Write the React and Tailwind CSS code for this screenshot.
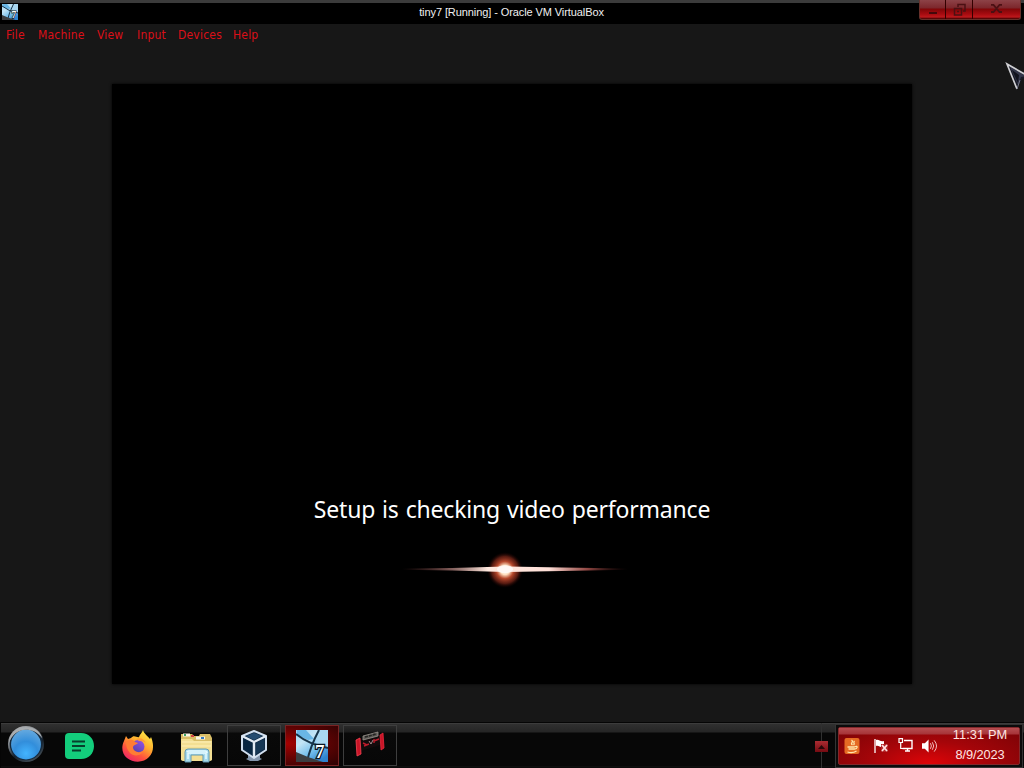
const menus = [
    { label: 'File', width: 'w-[20px]' },
    { label: 'Machine', width: 'w-[47px]' },
    { label: 'View', width: 'w-[28px]' },
    { label: 'Input', width: 'w-[29px]' },
    { label: 'Devices', width: 'w-[43px]' },
    { label: 'Help', width: 'w-[26px]' },
];

function TinyIcon({ className }) {
    return (
        <svg className={className} viewBox="0 0 32 32">
            <defs>
                <linearGradient id="sky" x1="0" y1="0" x2="0.7" y2="1">
                    <stop offset="0" stopColor="#9fd4f3" />
                    <stop offset="0.35" stopColor="#c3e4f5" />
                    <stop offset="0.7" stopColor="#71bdec" />
                    <stop offset="1" stopColor="#2f83cf" />
                </linearGradient>
            </defs>
            <rect width="32" height="32" fill="url(#sky)" />
            <path d="M23 0H32V17L20 13Z" fill="#a9d7f1" />
            <path d="M1 0H10L18 9L12 10L1 5Z" fill="#69b6e6" />
            <path d="M0 4Q12 14 32 18M23 0Q14 17 11 32" fill="none" stroke="#173449" strokeWidth="2" />
            <path d="M0 22L12 27L27 32H0Z" fill="#3c3e41" />
            <text
                x="19"
                y="28"
                fontSize="19"
                fontWeight="bold"
                fontFamily="Liberation Serif, serif"
                fill="#fff"
                stroke="#0b1520"
                strokeWidth="2.5"
                paintOrder="stroke"
            >
                7
            </text>
        </svg>
    );
}

function TitleBar() {
    return (
        <header className="flex h-6 border-t-[3px] border-[#3b3b3b] bg-black text-white">
            <div className="flex w-[104px] pl-[2px] pt-px">
                <TinyIcon className="h-4 w-4" />
            </div>
            <div className="flex-1 whitespace-nowrap pl-px text-center text-[11px] leading-[18px] tracking-[-0.09px] text-[#f0f0f0]">
                tiny7 [Running] - Oracle VM VirtualBox
            </div>
            <div className="-mt-[3px] flex h-5 w-[106px] pl-px">
                <div className="flex h-5 w-[102px] divide-x divide-[#300] rounded-b-[3px] border border-t-0 border-[#66302a] bg-[linear-gradient(#8d4247_0px,#7c262b_8px,#7f0608_9px,#a60b10_14px,#bd181c_17px,#3a0000_19px)]">
                    <div className="flex w-[26px] justify-center pt-[12px]">
                        <span className="h-[2px] w-2 bg-[#43090b]" />
                    </div>
                    <div className="flex w-[27px] justify-center pt-[3px]">
                        <svg
                            className="h-[13px] w-[13px]"
                            viewBox="0 0 13 13"
                            fill="none"
                            stroke="#4b1013"
                            strokeWidth="1.5"
                        >
                            <path d="M5 4V1.5H12V8H10M1.5 5.5H8.5V12H1.5ZM4 8.5H6" />
                        </svg>
                    </div>
                    <div className="flex flex-1 justify-center pt-[4px]">
                        <svg
                            className="h-[9px] w-[13px]"
                            viewBox="0 0 13 9"
                            fill="none"
                            stroke="#4b1013"
                            strokeWidth="1.8"
                        >
                            <path d="M1 .9H3.5L9.5 8H12M12 .9H9.5L3.5 8H1" />
                        </svg>
                    </div>
                </div>
            </div>
        </header>
    );
}

function MenuBar() {
    return (
        <nav className="flex h-[60px] gap-[12px] pl-[6px] pt-[3px] font-['DejaVu_Sans_Condensed','DejaVu_Sans',sans-serif] text-[12px] leading-4 tracking-[0.2px] text-[#dc0f18]">
            {menus.map((menu) => (
                <span
                    key={menu.label}
                    className={`whitespace-nowrap font-stretch-condensed ${menu.width}`}
                >
                    {menu.label}
                </span>
            ))}
        </nav>
    );
}

function Flare() {
    return (
        <svg className="mt-[14px] h-[60px] w-[260px]" viewBox="0 0 260 60">
            <defs>
                <radialGradient id="glow">
                    <stop offset="0" stopColor="#fff" />
                    <stop offset="0.26" stopColor="#ffdfc0" />
                    <stop offset="0.48" stopColor="#c94f30" stopOpacity="0.9" />
                    <stop offset="0.75" stopColor="#86291a" stopOpacity="0.65" />
                    <stop offset="1" stopColor="#200" stopOpacity="0" />
                </radialGradient>
                <linearGradient id="beam">
                    <stop offset="0" stopColor="#733" stopOpacity="0" />
                    <stop offset="0.2" stopColor="#a77470" stopOpacity="0.7" />
                    <stop offset="0.38" stopColor="#ffe9df" />
                    <stop offset="0.65" stopColor="#ffe0d8" />
                    <stop offset="0.82" stopColor="#b65a55" stopOpacity="0.8" />
                    <stop offset="1" stopColor="#411" stopOpacity="0" />
                </linearGradient>
            </defs>
            <circle cx="123" cy="30" r="18" fill="url(#glow)" />
            <path
                d="M20 28.5L70 28L123 26.5L180 27.5L246 28.5V29.7L180 31L123 32L70 30.5L20 29.7Z"
                fill="url(#beam)"
            />
            <ellipse cx="123" cy="29.2" rx="8" ry="4" fill="#fff" opacity="0.7" />
        </svg>
    );
}

function GuestScreen() {
    return (
        <main className="mx-auto flex h-[600px] w-[800px] flex-col items-center bg-black pt-[408px] shadow-[0_0_3px_#000]">
            <p className="whitespace-nowrap font-['Noto_Sans','Open_Sans',sans-serif] text-[23px] leading-[34px] tracking-[-0.19px] [word-spacing:1.2px] text-white">
                Setup is checking video performance
            </p>
            <Flare />
        </main>
    );
}

function StartOrb() {
    return (
        <svg className="h-[38px] w-[40px]" viewBox="0 0 40 40">
            <defs>
                <radialGradient id="orb" cx="0.5" cy="0.8" r="0.8">
                    <stop offset="0" stopColor="#43b4ff" />
                    <stop offset="0.5" stopColor="#328edb" />
                    <stop offset="1" stopColor="#65a9df" />
                </radialGradient>
                <linearGradient id="rim" x1="0" y1="0" x2="0.6" y2="1">
                    <stop offset="0" stopColor="#c8c8c8" />
                    <stop offset="0.45" stopColor="#72787e" />
                    <stop offset="0.7" stopColor="#15202b" />
                    <stop offset="1" stopColor="#3f4a53" />
                </linearGradient>
            </defs>
            <circle cx="20" cy="20" r="19" fill="url(#rim)" />
            <circle cx="20" cy="20" r="17.2" fill="#14293d" />
            <circle cx="20" cy="20.5" r="15.7" fill="url(#orb)" />
            <path d="M2 19C2 9 10 2 20 2C30 2 36 8 37 14C32 7 26 5 20 5C11 5 5 11 2 19Z" fill="#a8acaf" />
        </svg>
    );
}

function NotesIcon() {
    return (
        <svg className="h-[28px] w-[30px]" viewBox="0 0 30 28">
            <path d="M4 1H16C24 1 29 7 29 14S24 27 16 27H4Q0 27 0 23V5Q0 1 4 1Z" fill="#13cd7c" />
            <path d="M7 9.5H20M7 14H20M7 18.5H16" stroke="#073f2c" strokeWidth="1.8" />
        </svg>
    );
}

function FirefoxIcon() {
    return (
        <svg className="h-[32px] w-[32px]" viewBox="0 0 32 32">
            <defs>
                <linearGradient id="fox" x1="0.8" y1="0" x2="0.2" y2="1">
                    <stop offset="0" stopColor="#fff04a" />
                    <stop offset="0.4" stopColor="#ffad2d" />
                    <stop offset="0.7" stopColor="#ff533d" />
                    <stop offset="1" stopColor="#e9206c" />
                </linearGradient>
                <linearGradient id="globe" x1="1" y1="0" x2="0.3" y2="1">
                    <stop offset="0" stopColor="#9a55e9" />
                    <stop offset="1" stopColor="#5440ad" />
                </linearGradient>
            </defs>
            <path d="M21 0C22 4 26 6 28 9L29 7C32 14 32 22 27 27C22 33 11 33 5 28C0 24-1 17 2 11L4 6L6 9L9 8C12 4 15 8 17 7C18 4 20 3 21 0Z" fill="url(#fox)" />
            <circle cx="16" cy="16.5" r="6.5" fill="url(#globe)" />
            <path d="M4 12C7 9 11 9 13 12L16 13C15 15 12 14 11 17C11 22 18 24 22 20C20 26 12 27 8 23C5 20 4 16 4 12Z" fill="#ff7c34" />
            <path d="M14 9C18 7 22 9 24 13C21 11 19 11 17 11Z" fill="#ff9b35" />
        </svg>
    );
}

function FolderIcon() {
    return (
        <svg className="h-[31px] w-[33px]" viewBox="0 0 33 31">
            <path d="M1 5V2H12L14 4H19L20 2H30L32 6V28H1Z" fill="#d8bd67" />
            <path d="M3 3H10M16 6H25" stroke="#f7f5e4" strokeWidth="3" />
            <path d="M4 3H6" stroke="#3b9f61" strokeWidth="2" />
            <path d="M11 4H14" stroke="#d34445" strokeWidth="2" />
            <path d="M21 6H24" stroke="#397bc1" strokeWidth="2" />
            <path d="M1 7H12L14 9H32V27Q32 29 30 29H3Q1 29 1 27Z" fill="#f3df93" />
            <path d="M2 10H31M2 14H31" stroke="#fff0b8" />
            <path d="M5 30V20Q5 17 8 17H26Q29 17 29 20V30H23V23H11V30Z" fill="#a7dbed" stroke="#649ab2" />
            <path d="M7 20Q7 19 9 19H25Q27 19 27 21M8 27V21H26V27" fill="none" stroke="#e5faff" strokeWidth="1.5" />
        </svg>
    );
}

function VirtualBoxIcon() {
    return (
        <svg className="h-[32px] w-[28px]" viewBox="0 0 28 32">
            <path d="M8 23H20V28L22 29L18 31H10L6 29L8 28Z" fill="#8496ad" />
            <path d="M14 1L26 6V20L14 28L2 20V6Z" fill="#102b46" stroke="#d1dfef" strokeWidth="2" strokeLinejoin="round" />
            <path d="M2 6L14 12L26 6M14 12V27" fill="none" stroke="#e1eaf4" strokeWidth="2.4" />
            <path d="M14 3L22 6L14 10L6 6Z" fill="#244b70" />
            <path d="M4 9L12 13V24L4 19Z" fill="#082642" />
            <path d="M24 9L16 13V24L24 19Z" fill="#153654" />
        </svg>
    );
}

function HandheldIcon() {
    return (
        <svg className="mb-[4px] h-[26px] w-[30px]" viewBox="0 0 30 26">
            <path d="M6 8L25 3V14L6 20Z" fill="#130b0c" />
            <path d="M8 5L23 1V5L8 9Z" fill="#5d5a56" stroke="#99948e" strokeWidth="0.8" />
            <path d="M10 6L21 3" stroke="#242523" strokeWidth="1.6" strokeDasharray="3 1" />
            <path d="M1 9L5 7L6 23L2 25Z" fill="#c91527" stroke="#fb4454" strokeWidth="0.8" />
            <path d="M25 4L28 2L29 17L26 19Z" fill="#c91527" stroke="#e9293c" strokeWidth="0.8" />
            <path d="M8 12L12 14M9 15L14 13M19 10L24 8M19 8V12" stroke="#bd1b2b" strokeWidth="1.4" />
            <path d="M14 10L16 13L18 9" stroke="#c7a6a8" fill="none" strokeWidth="0.8" />
        </svg>
    );
}

function TaskButton({ active, children }) {
    return (
        <div
            className={`flex h-[41px] w-[54px] items-center justify-center border ${
                active
                    ? 'border-[#792323] bg-[radial-gradient(ellipse_at_0%_45%,#a60000_0%,#680303_45%,#2c0203_100%)]'
                    : 'border-[#3e3e3e] bg-[linear-gradient(#292929_0px,#1c1c1c_6px,#090909_7px,#070707_100%)]'
            }`}
        >
            {children}
        </div>
    );
}

function Tray() {
    return (
        <div className="flex w-[188px] border border-[#343434] bg-[#0b0b0b] p-[2px]">
            <div className="flex flex-1 rounded-[2px] border border-[#82282b] bg-[radial-gradient(ellipse_at_50%_100%,#e00508_0%,#a50509_45%,#780306_100%)]">
                <div className="flex w-full items-start bg-[linear-gradient(#b64d50_0px,#a63438_6px,transparent_7px)]">
                    <svg className="ml-[5px] mt-[10px] h-[16px] w-[16px]" viewBox="0 0 15 16">
                        <rect width="15" height="16" rx="2" fill="#e56a23" />
                        <path d="M7 2C10 4 5 5 8 7M10 3C8 5 11 5 9 7M3 9H10M10 9C14 7 13 11 10 11M4 11H10M3 14C6 15 9 15 12 13" fill="none" stroke="#ffe6ad" strokeWidth="1.3" />
                    </svg>
                    <svg className="ml-[14px] mt-[11px] h-[14px] w-[15px]" viewBox="0 0 15 14">
                        <path d="M1 0V14" stroke="#fff" strokeWidth="1.3" />
                        <path d="M2 1C5 0 6 3 10 2V8C6 9 5 6 2 7Z" fill="#fff" />
                        <path d="M7 5H14V13H7Z" fill="#b22428" />
                        <path d="M8 6L13 12M13 6L8 12" stroke="#ffe3e3" strokeWidth="1.8" />
                    </svg>
                    <svg className="ml-[9px] mt-[10px] h-[14px] w-[15px]" viewBox="0 0 15 14" fill="none" stroke="#fff">
                        <path d="M6 2.5H14V10.5H4.5M7 13H12M9.5 10V13" strokeWidth="1.4" />
                        <path d="M1 .7H4.5V4.5H1ZM2.7 4V10.5H5" strokeWidth="1.2" />
                    </svg>
                    <svg className="ml-[9px] mt-[11px] h-[14px] w-[15px]" viewBox="0 0 16 14">
                        <path d="M0 4H3L7 0V14L3 10H0Z" fill="#fff" />
                        <path d="M9 4Q11 7 9 10M11 3Q14 7 11 11M13 1Q18 7 13 13" fill="none" stroke="#f5c9c8" />
                    </svg>
                    <div className="ml-[10px] w-[66px] whitespace-nowrap text-center text-[12px] leading-5 tracking-[0.1px] text-[#ffe5e2]">
                        <div className="-mt-[3px] text-[12.8px]">11:31 PM</div>
                        <div className="text-[12.8px] tracking-[-0.1px]">8/9/2023</div>
                    </div>
                </div>
            </div>
        </div>
    );
}

function Taskbar() {
    return (
        <footer className="flex h-[46px] border-l border-t border-[#050505] bg-[linear-gradient(#484848_0px,#303030_1px,#252525_9px,#070707_10px,#070707_43px,#151515_44px,#000_45px)]">
            <div className="flex w-[226px] items-center">
                <div className="mb-[3px] ml-[5px] w-[59px]"><StartOrb /></div>
                <div className="w-[57px]"><NotesIcon /></div>
                <div className="w-[58px]"><FirefoxIcon /></div>
                <div className="pt-[3px]"><FolderIcon /></div>
            </div>
            <div className="flex gap-[4px] pt-[2px]">
                <TaskButton><VirtualBoxIcon /></TaskButton>
                <TaskButton active><TinyIcon className="h-8 w-8" /></TaskButton>
                <TaskButton><HandheldIcon /></TaskButton>
            </div>
            <div className="ml-auto mr-[7px] flex w-[13px] items-center bg-[linear-gradient(90deg,transparent_6px,#303030_6px,#303030_7px,transparent_7px)]">
                <div className="mt-px flex h-[11px] w-[13px] shrink-0 items-center justify-center bg-[linear-gradient(#a92c32,#760b12)]">
                    <svg className="h-[5px] w-[7px]" viewBox="0 0 7 5">
                        <path d="M0 5L3.5 1L7 5Z" fill="#26080a" />
                    </svg>
                </div>
            </div>
            <div className="flex pr-px pt-[1px]"><Tray /></div>
        </footer>
    );
}

function Cursor() {
    return (
        <svg className="absolute left-[1005px] top-[62px] h-[31px] w-[19px]" viewBox="0 0 19 31">
            <path d="M2 2L24 15L17 17L12 27Z" fill="#171925" />
            <path d="M5 5L13 23L16 15L21 14Z" fill="#34374b" />
            <path d="M7 8L13 21L14 13Z" fill="#11131d" />
            <path d="M22 13.5L2 2L12 27" fill="none" stroke="#cfcfd3" strokeWidth="1.7" />
            <path d="M12 27L15 18" stroke="#77798a" />
        </svg>
    );
}

export default function App() {
    return (
        <div className="relative flex h-[768px] w-[1024px] flex-col overflow-hidden bg-[#171717] font-['Liberation_Sans',Arial,sans-serif]">
            <TitleBar />
            <MenuBar />
            <GuestScreen />
            <div className="flex-1" />
            <Taskbar />
            <Cursor />
        </div>
    );
}
